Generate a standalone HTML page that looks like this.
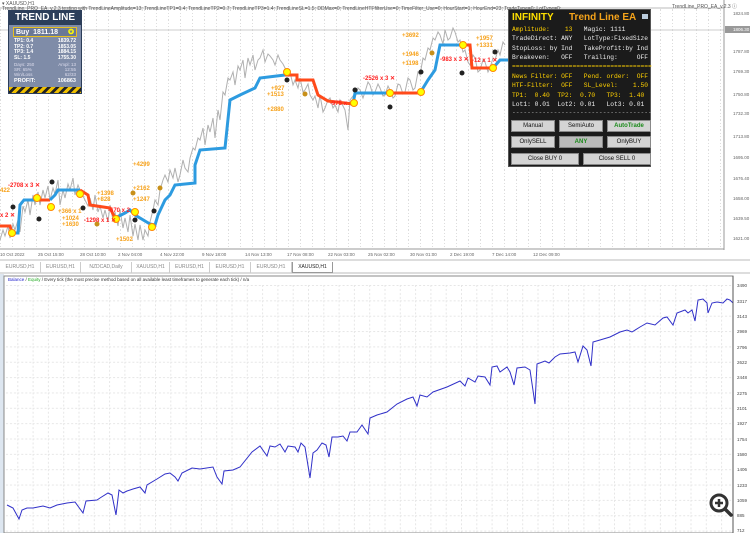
<!DOCTYPE html>
<html><head><meta charset="utf-8"><style>
*{margin:0;padding:0;box-sizing:border-box}
body{width:750px;height:533px;background:#fff;position:relative;overflow:hidden;font-family:"Liberation Sans",sans-serif}
.abs{position:absolute}
.t{font-size:5px;color:#555;white-space:nowrap}
.lp{left:8px;top:10px;width:74px;height:84px;background:#7f8ca8;border:1px solid #2c3e5a;overflow:hidden}
.rp{left:508px;top:9px;width:143px;height:158px;background:#1b1b1b;border:1px solid #555;font-family:"Liberation Mono",monospace;font-size:6.3px;color:#eee}
.rp .r{position:absolute;white-space:pre}
.btn{position:absolute;background:#d4d4d4;border:1px solid #888;color:#111;font-family:"Liberation Sans",sans-serif;font-size:6px;text-align:center;line-height:11px;height:12px}
.tab{position:absolute;top:262px;height:11px;font-size:5px;color:#888;line-height:11px;text-align:center;border-right:1px solid #ccc;overflow:hidden;white-space:nowrap}
</style></head><body>
<svg class="abs" style="left:0;top:0" width="750" height="533">
<defs>
<pattern id="vg" width="12" height="10" patternUnits="userSpaceOnUse"><line x1="0.5" y1="0" x2="0.5" y2="10" stroke="#ddd" stroke-dasharray="1,2"/></pattern>
<pattern id="bg" width="15.3" height="15.35" patternUnits="userSpaceOnUse" x="2" y="285"><path d="M0.5 0V15.35M0 0.5H15.3" stroke="#e6e6e6" stroke-dasharray="2,2" fill="none"/></pattern>
</defs>
<rect x="0" y="8" width="724" height="240" fill="url(#vg)"/>
<line x1="0" y1="30" x2="724" y2="30" stroke="#ccc"/>
<line x1="0" y1="8" x2="724" y2="8" stroke="#bbb"/>
<line x1="724" y1="0" x2="724" y2="250" stroke="#999"/>
<line x1="0" y1="249" x2="724" y2="249" stroke="#999"/>
<polyline fill="none" stroke="#b0b0b0" stroke-width="1" points="0,240 3,230 5,236 8,226 10,238 13,224 15,230 18,220 20,232 23,206 25,212 28,200 30,215 33,195 35,205 38,192 40,205 43,190 45,198 48,186 50,200 53,188 55,194 58,180 60,205 63,190 65,198 68,184 70,190 73,178 75,195 78,185 80,190 83,196 85,200 88,206 90,198 93,210 95,195 98,212 100,206 103,218 105,210 108,222 110,205 113,220 115,212 118,226 120,210 123,228 125,218 128,232 130,215 133,236 135,224 138,240 140,225 143,240 145,230 148,236 150,222 153,210 155,200 158,205 160,190 163,180 165,175 168,182 170,170 173,178 175,168 178,182 180,175 183,160 185,168 188,172 190,158 193,148 195,150 198,138 200,140 203,128 205,145 208,125 210,132 213,118 215,138 218,110 220,120 223,92 225,95 228,78 230,80 233,72 235,85 238,66 240,70 243,60 245,78 248,58 250,65 253,55 255,70 258,60 260,58 263,50 265,62 268,54 270,56 273,60 275,65 278,55 280,60 283,64 285,68 288,75 290,72 293,85 295,80 298,88 300,78 303,92 305,90 308,84 310,95 313,100 315,96 318,108 320,95 323,112 325,108 328,100 330,98 333,108 335,105 338,112 340,100 343,106 345,110 348,130 350,100 353,96 355,98 358,88 360,90 363,98 365,92 368,82 370,85 373,95 375,92 378,84 380,88 383,96 385,95 388,86 390,90 393,98 395,96 398,84 400,85 403,94 405,92 408,78 410,80 413,90 415,88 418,72 420,75 423,58 425,60 428,48 430,50 433,38 435,40 438,32 440,35 443,44 445,30 448,40 450,38 453,28 455,32 458,42 460,40 463,52 465,50 468,62 470,65 473,55 475,58 478,72 480,70 483,60 485,62 488,72 490,68 493,58 495,60 498,50 500,55 503,42 505,45"/>
<polyline fill="none" stroke="#ff4a1a" stroke-width="3" points="0,226 10,226 12,233"/>
<polyline fill="none" stroke="#2d9be0" stroke-width="3" points="12,233 18,233 20,205 24,200 35,200"/>
<polyline fill="none" stroke="#ff4a1a" stroke-width="3" points="35,200 50,200"/>
<polyline fill="none" stroke="#2d9be0" stroke-width="3" points="50,200 55,195 58,190 80,190"/>
<polyline fill="none" stroke="#ff4a1a" stroke-width="3" points="80,190 88,195 90,205 110,208 115,218"/>
<polyline fill="none" stroke="#2d9be0" stroke-width="3" points="115,218 125,213 130,210 135,215 150,224 155,225 158,215 165,200 170,195 175,185 195,183 195,165 200,150 225,148 230,100 240,95 255,88 260,78 285,75"/>
<polyline fill="none" stroke="#ff4a1a" stroke-width="3" points="285,75 297,75 297,80 313,80 318,95 328,101 353,104"/>
<polyline fill="none" stroke="#2d9be0" stroke-width="3" points="353,104 355,93 390,93"/>
<polyline fill="none" stroke="#ff4a1a" stroke-width="3" points="390,93 420,93"/>
<polyline fill="none" stroke="#2d9be0" stroke-width="3" points="420,93 428,80 435,70 440,45 460,45"/>
<polyline fill="none" stroke="#ff4a1a" stroke-width="3" points="460,45 470,45 472,68 493,68"/>
<polyline fill="none" stroke="#2d9be0" stroke-width="3" points="493,68 500,60 508,60"/>
<g fill="#ff0" stroke="#f80"><circle cx="287" cy="72" r="3.5"/><circle cx="354" cy="103" r="3.5"/><circle cx="390" cy="93" r="3.5"/><circle cx="421" cy="92" r="3.5"/><circle cx="463" cy="45" r="3.5"/><circle cx="493" cy="68" r="3.5"/><circle cx="37" cy="198" r="3.5"/><circle cx="51" cy="207" r="3.5"/><circle cx="80" cy="194" r="3.5"/><circle cx="12" cy="233" r="3.5"/><circle cx="116" cy="219" r="3.5"/><circle cx="135" cy="212" r="3.5"/><circle cx="152" cy="227" r="3.5"/></g>
<g fill="#222"><circle cx="287" cy="80" r="2.5"/><circle cx="355" cy="90" r="2.5"/><circle cx="421" cy="72" r="2.5"/><circle cx="462" cy="73" r="2.5"/><circle cx="495" cy="52" r="2.5"/><circle cx="52" cy="182" r="2.5"/><circle cx="13" cy="207" r="2.5"/><circle cx="39" cy="219" r="2.5"/><circle cx="83" cy="208" r="2.5"/><circle cx="135" cy="220" r="2.5"/><circle cx="154" cy="211" r="2.5"/><circle cx="390" cy="107" r="2.5"/></g>
<g fill="#c8901a"><circle cx="305" cy="94" r="2.5"/><circle cx="432" cy="53" r="2.5"/><circle cx="160" cy="188" r="2.5"/><circle cx="133" cy="193" r="2.5"/><circle cx="97" cy="224" r="2.5"/></g>
<g font-family="Liberation Sans" font-size="6" font-weight="bold">
<g fill="#f7a21b"><text x="271" y="90">+927</text><text x="267" y="96">+1513</text><text x="267" y="111">+2880</text><text x="402" y="37">+3692</text><text x="402" y="56">+1946</text><text x="402" y="65">+1198</text><text x="476" y="40">+1957</text><text x="476" y="47">+1331</text><text x="133" y="166">+4299</text><text x="97" y="195">+1398</text><text x="97" y="201">+828</text><text x="133" y="190">+2162</text><text x="133" y="201">+1247</text><text x="58" y="213">+366 x 1</text><text x="62" y="220">+1024</text><text x="62" y="226">+1630</text><text x="116" y="241">+1502</text><text x="0" y="192">422</text></g>
<g fill="#f22"><text x="363" y="80">-2526 x 3 ✕</text><text x="440" y="61">-983 x 3 ✕</text><text x="472" y="62">-12 x 1 ✕</text><text x="330" y="105">-975 x</text><text x="8" y="187">-2708 x 3 ✕</text><text x="0" y="217">x 2 ✕</text><text x="108" y="212">-670 x 2</text><text x="84" y="222">-1298 x 1 ✕</text></g>
</g>
<g font-family="Liberation Sans" font-size="4.5" fill="#666">
<text x="733" y="15">1824.80</text><text x="733" y="53">1787.80</text><text x="733" y="73">1769.30</text><text x="733" y="96">1750.80</text><text x="733" y="115">1732.30</text><text x="733" y="138">1713.80</text><text x="733" y="159">1695.00</text><text x="733" y="180">1676.40</text><text x="733" y="200">1658.00</text><text x="733" y="220">1639.50</text><text x="733" y="240">1621.00</text>
<rect x="725" y="26" width="25" height="7" fill="#999"/><text x="733" y="31" fill="#fff">1806.30</text>
<text x="0" y="256">10 Oct 2022</text><text x="38" y="256">25 Oct 15:00</text><text x="80" y="256">28 Oct 10:00</text><text x="118" y="256">2 Nov 04:00</text><text x="160" y="256">4 Nov 22:00</text><text x="202" y="256">9 Nov 18:00</text><text x="245" y="256">14 Nov 13:00</text><text x="287" y="256">17 Nov 08:00</text><text x="328" y="256">22 Nov 03:00</text><text x="368" y="256">25 Nov 02:00</text><text x="410" y="256">30 Nov 01:00</text><text x="450" y="256">2 Dec 19:00</text><text x="492" y="256">7 Dec 14:00</text><text x="533" y="256">12 Dec 09:00</text>
</g>
<line x1="0" y1="260" x2="750" y2="260" stroke="#bbb"/>
<line x1="0" y1="273" x2="750" y2="273" stroke="#bbb"/>
<rect x="0" y="274" width="4" height="259" fill="#dde6f0"/>
<rect x="4" y="276" width="729" height="257" fill="none" stroke="#888"/>
<rect x="5" y="285" width="727" height="248" fill="url(#bg)"/>
<polyline fill="none" stroke="#3030c8" stroke-width="1" points="7,505 13,508 19,519 22,510 27,508 33,508 43,506 50,508 57,505 67,503 75,502 83,513 86,501 97,500 100,498 108,493 112,495 116,515 119,490 123,493 127,491 133,489 140,487 145,493 147,485 157,479 165,474 170,473 175,477 178,481 182,473 192,468 200,469 213,467 217,477 222,484 224,471 233,470 240,467 252,452 260,446 267,456 270,446 275,447 280,444 285,452 288,446 295,447 298,452 301,443 305,447 310,478 313,453 317,450 322,443 326,445 329,457 332,437 338,437 343,436 347,441 350,432 357,432 362,425 368,434 370,418 377,415 387,412 397,404 407,399 413,397 417,406 420,395 427,397 433,392 447,387 460,381 465,386 468,378 475,382 478,376 485,377 490,385 492,367 497,366 500,372 507,367 510,372 514,385 517,368 525,367 530,370 535,404 537,364 545,361 549,363 555,357 560,354 570,353 575,352 578,362 583,346 587,350 591,366 593,342 600,340 610,337 620,332 627,330 632,332 640,327 647,323 655,325 663,318 667,317 673,325 677,313 685,310 688,313 692,310 695,321 698,300 703,299 707,303 708,313 712,303 717,302 723,303 727,299 730,300 733,303"/>
<line x1="733" y1="276" x2="733" y2="533" stroke="#555"/>
<g font-family="Liberation Sans" font-size="4.5" fill="#444">
<text x="737" y="287">3490</text><text x="737" y="303">3317</text><text x="737" y="318">3143</text><text x="737" y="333">2969</text><text x="737" y="349">2796</text><text x="737" y="364">2622</text><text x="737" y="379">2448</text><text x="737" y="395">2275</text><text x="737" y="410">2101</text><text x="737" y="425">1927</text><text x="737" y="441">1754</text><text x="737" y="456">1580</text><text x="737" y="471">1406</text><text x="737" y="487">1233</text><text x="737" y="502">1059</text><text x="737" y="517">885</text><text x="737" y="532">712</text>
</g>
<text x="8" y="281" font-family="Liberation Sans" font-size="4.5" fill="#333"><tspan fill="#22c">Balance</tspan> / <tspan fill="#2a2">Equity</tspan> / Every tick (the most precise method based on all available least timeframes to generate each tick) / n/a</text>
<circle cx="719" cy="503" r="8" fill="#fff" stroke="#333" stroke-width="3"/>
<path d="M715 503h8M719 499v8" stroke="#333" stroke-width="2.5"/>
<path d="M725 509l6 6" stroke="#333" stroke-width="3.5" stroke-linecap="round"/>
</svg>
<div class="abs t" style="left:2px;top:1px">▾ XAUUSD,H1</div>
<div class="abs t" style="left:2px;top:6px">TrendLine_PRO_EA_v.2.3 testing with TrendLineAmplitude=13; TrendLineTP1=0.4; TrendLineTP2=0.7; TrendLineTP3=1.4; TrendLineSL=1.5; DDMax=0; TrendLineHTFfilterUse=0; TimeFilter_Use=0; HourStart=1; HourEnd=23; TradeType=0; LotType=0;</div>
<div class="abs t" style="left:672px;top:3px">TrendLine_PRO_EA_v.2.3 ⓘ</div>
<div class="abs lp">
 <div style="background:#2c3e5a;color:#fff;font-weight:bold;font-size:10px;text-align:center;height:14px;line-height:14px">TREND LINE</div>
 <div style="margin:2px 4px;border:1px solid #e8c020;background:#6a7896;color:#fff;font-weight:bold;font-size:7px;height:10px;line-height:9px;padding-left:2px">Buy&nbsp; 1811.18<span style="float:right;color:#ff0;padding-right:2px">✪</span></div>
 <div style="font-size:5px;color:#fff;font-weight:bold;line-height:5.5px;padding:0 5px">
 <div>TP1: 0.4<span style="float:right">1839.72</span></div><div>TP2: 0.7<span style="float:right">1853.05</span></div><div>TP3: 1.4<span style="float:right">1884.15</span></div><div>SL: 1.5<span style="float:right">1755.30</span></div></div>
 <div style="font-size:4.5px;color:#dde;line-height:5px;padding:1px 5px 0">
 <div>Days: 250<span style="float:right">Ampl: 13</span></div><div>SR: 65%<span style="float:right">12:55</span></div><div>Win/Loss<span style="float:right">62/33</span></div></div>
 <div style="font-size:5.5px;color:#fff;font-weight:bold;padding:1px 5px;line-height:6px">PROFIT:<span style="float:right">106863</span></div>
 <div style="position:absolute;left:0;bottom:0;width:72px;height:6px;background:repeating-linear-gradient(135deg,#f0c000 0 3px,#222 3px 6px)"></div>
</div>
<div class="abs rp">
 <div class="r" style="left:3px;top:2px;font-family:'Liberation Sans';font-weight:bold;font-size:10px;color:#ffe000">INFINITY</div>
 <div class="r" style="left:60px;top:2px;font-family:'Liberation Sans';font-weight:bold;font-size:10px;color:#f5a31a">Trend Line EA</div>
 <div class="abs" style="left:133px;top:4px;width:6px;height:5px;background:#bcd"></div>
 <div class="r" style="left:3px;top:16px"><span style="color:#ffd000">Amplitude:    13</span>   Magic: 1111</div>
 <div class="r" style="left:3px;top:25px">TradeDirect: ANY   LotType:FixedSize</div>
 <div class="r" style="left:3px;top:35px">StopLoss: by Ind   TakeProfit:by Ind</div>
 <div class="r" style="left:3px;top:44px">Breakeven:   OFF   Trailing:     OFF</div>
 <div class="r" style="left:3px;top:53px;color:#ffd000">=====================================</div>
 <div class="r" style="left:3px;top:63px;color:#ffd000">News Filter: OFF   Pend. order:  OFF</div>
 <div class="r" style="left:3px;top:72px;color:#ffd000">HTF-Filter:  OFF   SL_Level:    1.50</div>
 <div class="r" style="left:3px;top:82px;color:#ffd000">TP1:  0.40  TP2:  0.70   TP3:  1.40</div>
 <div class="r" style="left:3px;top:91px">Lot1: 0.01  Lot2: 0.01   Lot3: 0.01</div>
 <div class="r" style="left:3px;top:99px;color:#aaa">-------------------------------------</div>
 <div class="btn" style="left:2px;top:110px;width:44px">Manual</div>
 <div class="btn" style="left:50px;top:110px;width:44px">SemiAuto</div>
 <div class="btn" style="left:98px;top:110px;width:44px;color:#1a8a1a;font-weight:bold">AutoTrade</div>
 <div class="btn" style="left:2px;top:126px;width:44px">OnlySELL</div>
 <div class="btn" style="left:50px;top:126px;width:44px;background:#bbb;color:#1a8a1a;font-weight:bold">ANY</div>
 <div class="btn" style="left:98px;top:126px;width:44px">OnlyBUY</div>
 <div class="btn" style="left:2px;top:143px;width:68px">Close BUY 0</div>
 <div class="btn" style="left:74px;top:143px;width:68px">Close SELL 0</div>
</div>
<div class="tab" style="left:0;width:41px">EURUSD,H1</div>
<div class="tab" style="left:41px;width:40px">EURUSD,H1</div>
<div class="tab" style="left:81px;width:51px">NZDCAD,Daily</div>
<div class="tab" style="left:132px;width:38px">XAUUSD,H1</div>
<div class="tab" style="left:170px;width:40px">EURUSD,H1</div>
<div class="tab" style="left:210px;width:41px">EURUSD,H1</div>
<div class="tab" style="left:251px;width:41px">EURUSD,H1</div>
<div class="tab" style="left:292px;width:41px;color:#222;background:#fff;border:1px solid #999;border-top:none">XAUUSD,H1</div>
</body></html>
